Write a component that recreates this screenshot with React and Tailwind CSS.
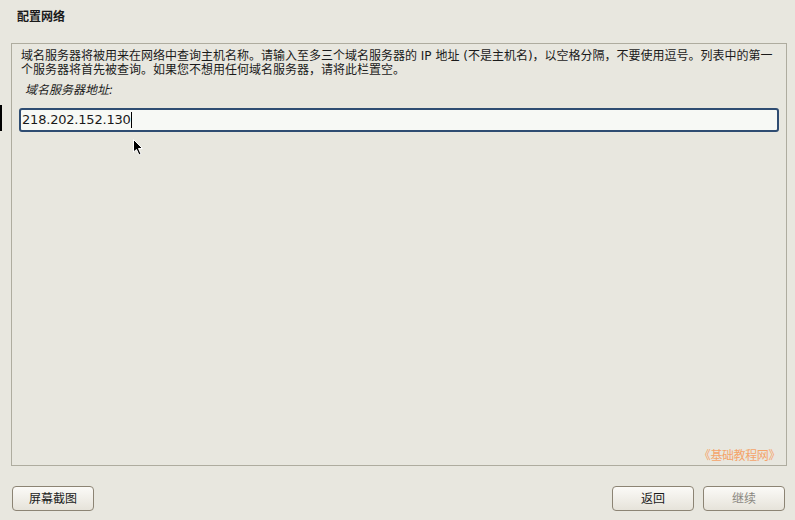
import React from 'react';

const cjk = { fontFamily: '"DejaVu Sans", "Noto Sans CJK SC", sans-serif' };

function Btn({ children, disabled }) {
  return (
    <button
      className={`w-[82px] h-[25px] rounded-[4px] border border-[#8c8474] bg-gradient-to-b from-[#fbfaf7] to-[#e6e3da] text-[12px] leading-none ${disabled ? 'text-[#8a877f]' : 'text-[#1a1a1a]'}`}
      style={cjk}
    >
      {children}
    </button>
  );
}

export default function App() {
  return (
    <div className="relative w-[795px] h-[520px] bg-[#e8e7df] flex flex-col text-[#1a1a1a] overflow-hidden" style={cjk}>
      {/* title */}
      <div className="h-[43px] pl-[17px] pt-[10px] text-[12px] font-bold leading-[14px]">配置网络</div>

      {/* main panel */}
      <div className="relative mx-[11px] w-[776px] h-[423px] border border-[#aeac9f] flex flex-col">
        <div className="pl-[9px] pt-[5px] text-[12px] leading-[14px] whitespace-nowrap">
          域名服务器将被用来在网络中查询主机名称。请输入至多三个域名服务器的 IP 地址 (不是主机名)，以空格分隔，不要使用逗号。列表中的第一
          <br />
          个服务器将首先被查询。如果您不想用任何域名服务器，请将此栏置空。
        </div>
        <div className="pl-[13px] pt-[6px] text-[12px] leading-[14px] italic">域名服务器地址:</div>
        <div className="px-[7px] pt-[11px]">
          <div className="h-[24px] rounded-[3px] border-2 border-[#2f4d72] bg-[#f7f9f5] flex items-center pl-[1px] text-[13px] tracking-[-0.2px]" style={{ fontFamily: '"DejaVu Sans", sans-serif' }}>
            218.202.152.130
            <span className="inline-block w-px h-[16px] bg-black" />
          </div>
        </div>
        <div className="mt-auto self-end pr-[6px] pb-[2px] text-[12px] leading-[14px] tracking-[-0.4px] text-[#f4a46a]">《基础教程网》</div>
      </div>

      {/* footer */}
      <div className="flex items-start pt-[20px] pl-[12px] pr-[10px]">
        <Btn>屏幕截图</Btn>
        <div className="flex-1" />
        <div className="flex gap-[9px]">
          <Btn>返回</Btn>
          <Btn disabled>继续</Btn>
        </div>
      </div>

      {/* left edge marker */}
      <div className="absolute left-0 top-[105px] w-[2px] h-[26px] bg-black" />

      {/* mouse pointer */}
      <svg className="absolute left-[133px] top-[139px]" width="12" height="18" viewBox="0 0 12 18">
        <path d="M0.5 0.5 L0.5 13 L3.5 10.5 L6 16 L8 15 L5.5 9.5 L9.5 9.5 Z" fill="#000" stroke="#fff" strokeWidth="1" />
      </svg>
    </div>
  );
}
